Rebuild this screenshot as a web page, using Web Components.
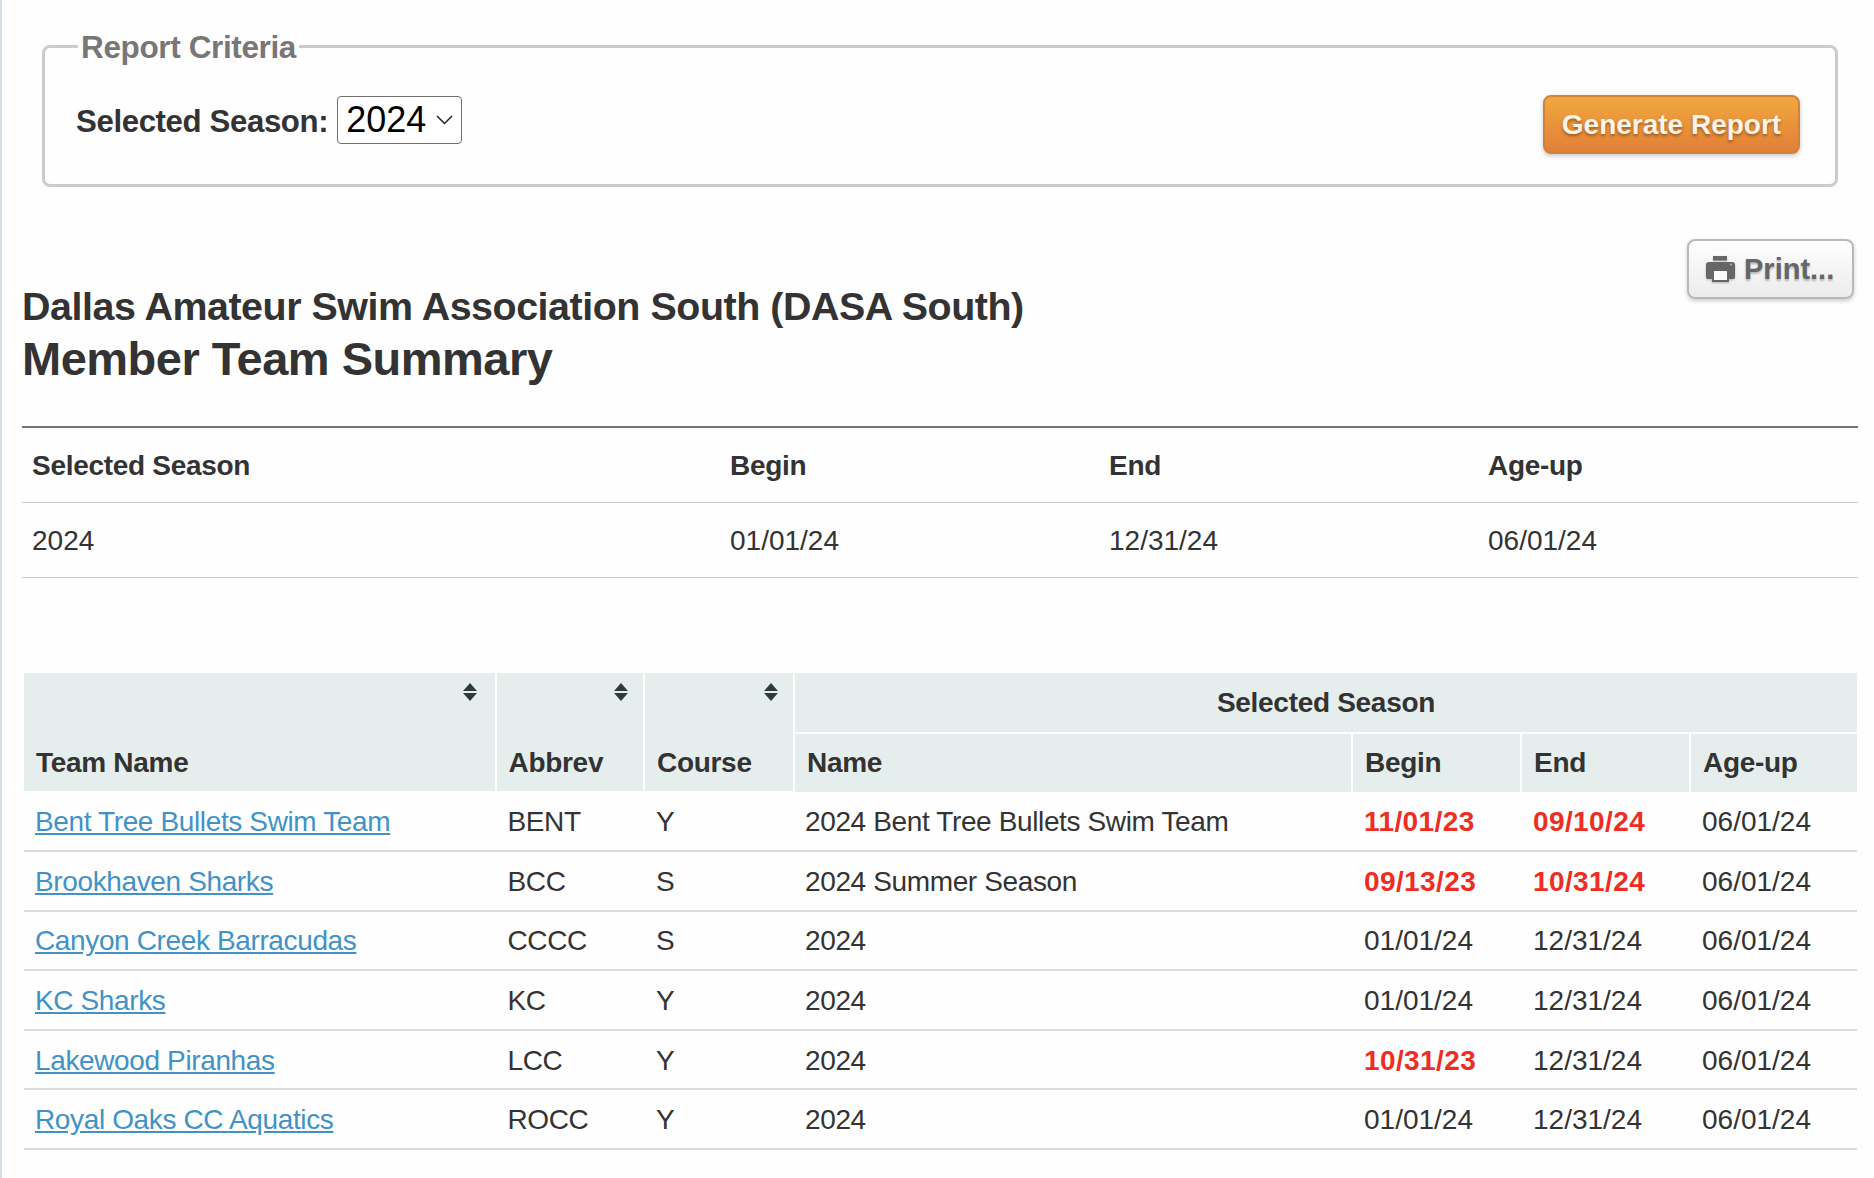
<!DOCTYPE html>
<html lang="en">
<head>
<meta charset="utf-8">
<title>Member Team Summary</title>
<style>
  html, body { margin: 0; background: #fefefe; }
  body { font-family: "Liberation Sans", Arial, sans-serif; color: #333; font-size: 28px; }
</style>
</head>
<body>
<report-page>
  <report-criteria legend="Report Criteria" label="Selected Season:" value="2024">
    <orange-button>Generate Report</orange-button>
  </report-criteria>
  <report-heading org="Dallas Amateur Swim Association South (DASA South)" title-text="Member Team Summary">
    <print-button>Print...</print-button>
  </report-heading>
  <season-table></season-table>
  <team-table></team-table>
</report-page>

<script>
class ReportPage extends HTMLElement {
    constructor() {
        super();
        this.attachShadow({ mode: 'open' });
    }
    connectedCallback() {
        this.shadowRoot.innerHTML = `
            <style>
                :host {
                    display: block;
                    box-sizing: border-box;
                    min-height: 1178px;
                    border-left: 2px solid #d5e0e6;
                    padding: 31px 16px 0 20px;
                }
            </style>
            <slot></slot>
        `;
    }
}

class ReportCriteria extends HTMLElement {
    constructor() {
        super();
        this.attachShadow({ mode: 'open' });
    }
    connectedCallback() {
        const legend = this.getAttribute('legend') || '';
        const label = this.getAttribute('label') || '';
        const value = this.getAttribute('value') || '';
        this.shadowRoot.innerHTML = `
            <style>
                :host { display: block; margin: 0 20px 0 20px; }
                fieldset {
                    margin: 0;
                    padding: 0;
                    height: 156px;
                    box-sizing: border-box;
                    border: 3px solid #ccc;
                    border-radius: 8px;
                    display: flex;
                }
                legend {
                    position: relative;
                    top: 1px;
                    margin-left: 33px;
                    padding: 0 3px;
                    font-size: 31.500px;
                    letter-spacing: -.37px;
                    line-height: 30px;
                    font-weight: bold;
                    color: #777;
                }
                .row {
                    display: flex;
                    justify-content: space-between;
                    align-items: flex-start;
                    box-sizing: border-box;
                    width: 100%;
                    padding: 35px 35px 0 31px;
                }
                .field { display: flex; align-items: center; gap: 9px; }
                .label { font-size: 31.200px; letter-spacing: -.38px; font-weight: bold; color: #333; position: relative; top: 2px; }
                .select {
                    box-sizing: border-box;
                    width: 125px;
                    height: 48px;
                    border: 1.500px solid #707070;
                    border-radius: 4px;
                    background: #fff;
                    color: #000;
                    font-size: 36px;
                    display: flex;
                    align-items: center;
                    padding-left: 8px;
                    gap: 10px;
                }
                svg { display: block; }
                ::slotted(orange-button) { margin-top: -1px; }
            </style>
            <fieldset>
                <legend>${legend}</legend>
                <div class="row">
                    <div class="field">
                        <span class="label">${label}</span>
                        <div class="select">
                            <span>${value}</span>
                            <svg width="17" height="10" viewBox="0 0 17 10"><path d="M1 1l7.500 7.500L16 1" fill="none" stroke="#222" stroke-width="1.500"/></svg>
                        </div>
                    </div>
                    <slot></slot>
                </div>
            </fieldset>
        `;
    }
}

class OrangeButton extends HTMLElement {
    constructor() {
        super();
        this.attachShadow({ mode: 'open' });
    }
    connectedCallback() {
        this.shadowRoot.innerHTML = `
            <style>
                :host {
                    display: flex;
                    align-items: center;
                    justify-content: center;
                    box-sizing: border-box;
                    width: 257px;
                    height: 59px;
                    border: 2px solid #cf8238;
                    border-radius: 8px;
                    background: linear-gradient(#f0a83f, #e27f37);
                    box-shadow: 0 2px 4px rgba(0,0,0,.22);
                    color: #fdf3e8;
                    font-size: 28px;
                    font-weight: bold;
                    text-shadow: 0 2px 3px rgba(90,50,10,.55);
                }
            </style>
            <slot></slot>
        `;
    }
}

class PrintButton extends HTMLElement {
    constructor() {
        super();
        this.attachShadow({ mode: 'open' });
    }
    connectedCallback() {
        this.shadowRoot.innerHTML = `
            <style>
                :host {
                    display: flex;
                    align-items: center;
                    gap: 9px;
                    box-sizing: border-box;
                    width: 167px;
                    height: 60px;
                    padding-left: 17px;
                    border: 2px solid #b9b9b9;
                    border-radius: 8px;
                    background: linear-gradient(#fefefe, #ececec);
                    box-shadow: 0 2px 4px rgba(0,0,0,.2);
                    color: #666;
                    font-size: 29px;
                    font-weight: bold;
                    text-shadow: 0 2px 2px rgba(0,0,0,.25);
                }
                svg { display: block; flex: none; filter: drop-shadow(0 1px 1px rgba(0,0,0,.25)); }
            </style>
            <svg width="29" height="26" viewBox="0 0 29 26">
                <path fill="#666" d="M7 0h14v4.500H7z"/>
                <path fill="#666" d="M3 6h23a3 3 0 0 1 3 3v12a2 2 0 0 1-2 2H2a2 2 0 0 1-2-2V9a3 3 0 0 1 3-3z"/>
                <path fill="#666" d="M6 13h17v13H6z"/>
                <path fill="#fafafa" d="M8 15h13v9H8z"/>
                <circle cx="25" cy="8.500" r="1" fill="#bbb"/>
            </svg>
            <slot></slot>
        `;
    }
}

class ReportHeading extends HTMLElement {
    constructor() {
        super();
        this.attachShadow({ mode: 'open' });
    }
    connectedCallback() {
        const org = this.getAttribute('org') || '';
        const titleText = this.getAttribute('title-text') || '';
        this.shadowRoot.innerHTML = `
            <style>
                :host {
                    display: flex;
                    justify-content: space-between;
                    align-items: flex-start;
                    margin-top: 52px;
                    height: 187px;
                    padding-right: 4px;
                }
                .titles { padding-top: 43px; }
                h2, h1 { margin: 0; color: #333; font-weight: bold; }
                h2 { font-size: 39.400px; letter-spacing: -.45px; line-height: 48px; }
                h1 { font-size: 47px; letter-spacing: -.5px; line-height: 57px; }
            </style>
            <div class="titles">
                <h2>${org}</h2>
                <h1>${titleText}</h1>
            </div>
            <slot></slot>
        `;
    }
}

class SeasonTable extends HTMLElement {
    constructor() {
        super();
        this.attachShadow({ mode: 'open' });
    }
    connectedCallback() {
        this.shadowRoot.innerHTML = `
            <style>
                :host { display: block; }
                table { border-collapse: collapse; table-layout: fixed; width: 1836px; border-top: 2px solid #777; }
                th, td {
                    box-sizing: border-box;
                    height: 75px;
                    padding: 2px 10px 0;
                    text-align: left;
                    font-size: 28px;
                    color: #333;
                    border-bottom: 1px solid #ccc;
                }
                th { letter-spacing: -.3px; }
            </style>
            <table>
                <colgroup>
                    <col style="width:698px"><col style="width:379px"><col style="width:379px"><col>
                </colgroup>
                <tr><th>Selected Season</th><th>Begin</th><th>End</th><th>Age-up</th></tr>
                <tr><td>2024</td><td>01/01/24</td><td>12/31/24</td><td>06/01/24</td></tr>
            </table>
        `;
    }
}

class SortArrows extends HTMLElement {
    constructor() {
        super();
        this.attachShadow({ mode: 'open' });
    }
    connectedCallback() {
        this.shadowRoot.innerHTML = `
            <style>
                :host { position: absolute; top: 10px; right: var(--sort-right, 14px); display: block; width: 16px; height: 18px; }
                svg { display: block; }
            </style>
            <svg width="16" height="18" viewBox="0 0 16 18">
                <path fill="#2f3a3f" d="M8 0l7 8H1zM1 10h14l-7 8z"/>
            </svg>
        `;
    }
}

class TeamTable extends HTMLElement {
    constructor() {
        super();
        this.attachShadow({ mode: 'open' });
    }
    connectedCallback() {
        const rows = [
            ['Bent Tree Bullets Swim Team', 'BENT', 'Y', '2024 Bent Tree Bullets Swim Team', '!11/01/23', '!09/10/24', '06/01/24'],
            ['Brookhaven Sharks', 'BCC', 'S', '2024 Summer Season', '!09/13/23', '!10/31/24', '06/01/24'],
            ['Canyon Creek Barracudas', 'CCCC', 'S', '2024', '01/01/24', '12/31/24', '06/01/24'],
            ['KC Sharks', 'KC', 'Y', '2024', '01/01/24', '12/31/24', '06/01/24'],
            ['Lakewood Piranhas', 'LCC', 'Y', '2024', '!10/31/23', '12/31/24', '06/01/24'],
            ['Royal Oaks CC Aquatics', 'ROCC', 'Y', '2024', '01/01/24', '12/31/24', '06/01/24'],
        ];
        const dateCell = (d) => d[0] === '!' ? `<td class="late">${d.slice(1)}</td>` : `<td class="date">${d}</td>`;
        this.shadowRoot.innerHTML = `
            <style>
                :host { display: block; margin: 95px 0 0 2px; }
                table { border-collapse: collapse; table-layout: fixed; width: 1833px; }
                th {
                    box-sizing: border-box;
                    position: relative;
                    height: 60px;
                    padding: 0 12px;
                    background: #e6eeed;
                    border-right: 2px solid #fefefe;
                    border-bottom: 2px solid #fefefe;
                    font-size: 28px;
                    letter-spacing: -.3px;
                    text-align: left;
                    color: #333;
                }
                th.tall { vertical-align: bottom; padding-bottom: 12px; }
                th.first { --sort-right: 17px; }
                th.group { text-align: center; padding-top: 2px; }
                th:last-child { border-right: 0; }
                tr.sub th { height: 59px; padding-top: 1px; border-bottom: 0; }
                td {
                    box-sizing: border-box;
                    height: 59.600px;
                    padding: 2px 11px 0 12px;
                    font-size: 28px;
                    letter-spacing: -.37px;
                    color: #333;
                    border-bottom: 2px solid #ddd;
                    white-space: nowrap;
                }
                td:first-child, td:nth-child(4) { padding-left: 11px; }
                td.late { color: #ee2e24; font-weight: bold; letter-spacing: .4px; }
                td.date { letter-spacing: 0; }
                a { color: #4292c6; text-decoration: underline; }
            </style>
            <table>
                <colgroup>
                    <col style="width:471.500px"><col style="width:148.500px"><col style="width:150px">
                    <col style="width:558px"><col style="width:169px"><col style="width:169px"><col>
                </colgroup>
                <tr>
                    <th class="tall first" rowspan="2">Team Name<sort-arrows></sort-arrows></th>
                    <th class="tall" rowspan="2">Abbrev<sort-arrows></sort-arrows></th>
                    <th class="tall" rowspan="2">Course<sort-arrows></sort-arrows></th>
                    <th class="group" colspan="4">Selected Season</th>
                </tr>
                <tr class="sub"><th>Name</th><th>Begin</th><th>End</th><th>Age-up</th></tr>
                ${rows.map((r) => `
                    <tr>
                        <td><a href="#">${r[0]}</a></td>
                        <td>${r[1]}</td>
                        <td>${r[2]}</td>
                        <td>${r[3]}</td>
                        ${r.slice(4).map(dateCell).join('')}
                    </tr>
                `).join('')}
            </table>
        `;
    }
}

customElements.define('report-page', ReportPage);
customElements.define('report-criteria', ReportCriteria);
customElements.define('orange-button', OrangeButton);
customElements.define('print-button', PrintButton);
customElements.define('report-heading', ReportHeading);
customElements.define('season-table', SeasonTable);
customElements.define('sort-arrows', SortArrows);
customElements.define('team-table', TeamTable);
</script>
</body>
</html>
